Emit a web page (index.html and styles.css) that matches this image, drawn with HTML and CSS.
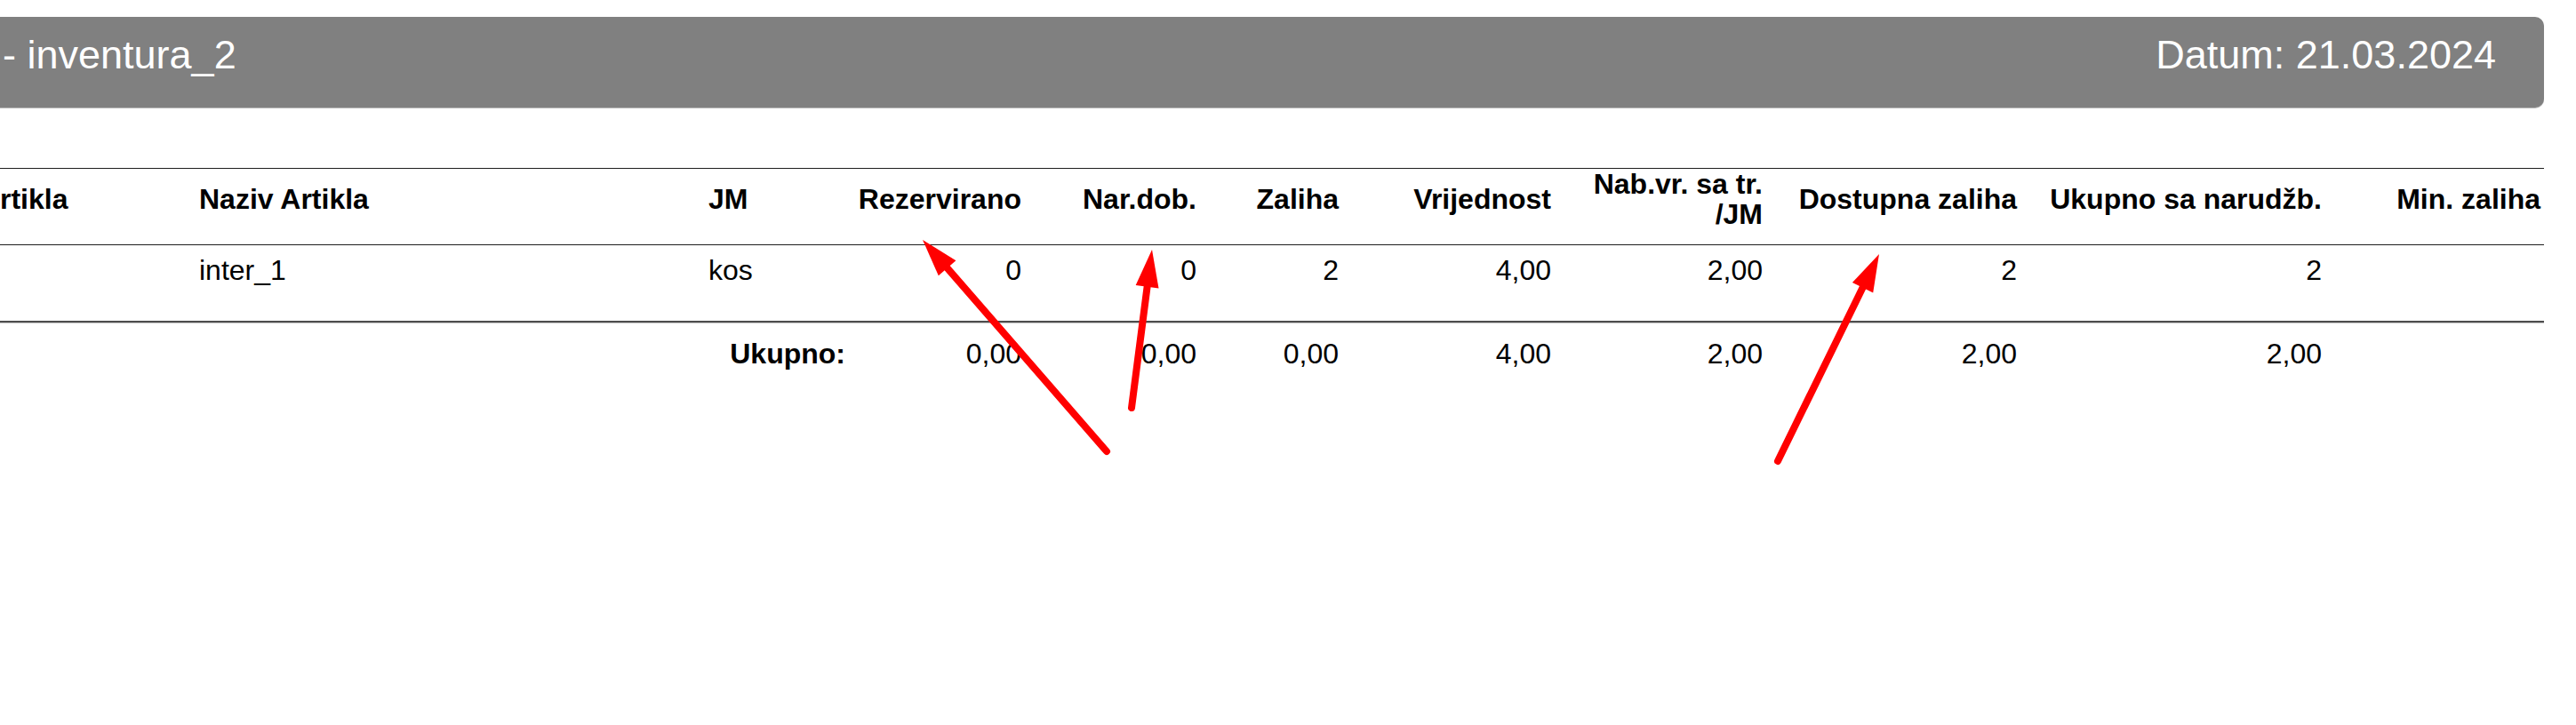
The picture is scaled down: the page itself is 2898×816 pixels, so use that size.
FILE: index.html
```html
<!DOCTYPE html>
<html lang="hr">
<head>
<meta charset="utf-8">
<title>Inventura - inventura_2</title>
<link rel="stylesheet" href="styles.css">
</head>
<body>
<div class="page">
  <header class="title-bar">
    <span class="title">- inventura_2</span>
    <span class="date">Datum: 21.03.2024</span>
  </header>
  <div class="table-wrap">
    <table class="report">
      <colgroup>
        <col class="c-sifra">
        <col class="c-naziv">
        <col class="c-jm">
        <col class="c-rez">
        <col class="c-nar">
        <col class="c-zal">
        <col class="c-vri">
        <col class="c-nab">
        <col class="c-dos">
        <col class="c-uku">
        <col class="c-min">
      </colgroup>
      <thead>
        <tr>
          <th class="l">Šifra Artikla</th>
          <th class="l">Naziv Artikla</th>
          <th class="l">JM</th>
          <th>Rezervirano</th>
          <th>Nar.dob.</th>
          <th>Zaliha</th>
          <th>Vrijednost</th>
          <th class="wrap">Nab.vr. sa tr. /JM</th>
          <th>Dostupna zaliha</th>
          <th>Ukupno sa narudžb.</th>
          <th>Min. zaliha</th>
        </tr>
      </thead>
      <tbody>
        <tr>
          <td class="l"></td>
          <td class="l">inter_1</td>
          <td class="l">kos</td>
          <td>0</td>
          <td>0</td>
          <td>2</td>
          <td>4,00</td>
          <td>2,00</td>
          <td>2</td>
          <td>2</td>
          <td></td>
        </tr>
      </tbody>
      <tfoot>
        <tr>
          <td colspan="3" class="total-label">Ukupno:</td>
          <td>0,00</td>
          <td>0,00</td>
          <td>0,00</td>
          <td>4,00</td>
          <td>2,00</td>
          <td>2,00</td>
          <td>2,00</td>
          <td></td>
        </tr>
      </tfoot>
    </table>
  </div>
</div>
<svg class="annotations" width="2898" height="816" viewBox="0 0 2898 816" aria-hidden="true">
  <g class="arrow">
    <line x1="1245" y1="508" x2="1065.6" y2="301.7"/>
    <polygon points="1038,270 1075.4,293.2 1055.8,310.2"/>
  </g>
  <g class="arrow">
    <line x1="1273" y1="459" x2="1290.6" y2="322.7"/>
    <polygon points="1296,281 1303.5,324.4 1277.7,321.0"/>
  </g>
  <g class="arrow">
    <line x1="2000" y1="519" x2="2095.5" y2="323.7"/>
    <polygon points="2114,286 2107.2,329.4 2083.9,318.0"/>
  </g>
</svg>
</body>
</html>
```

FILE: styles.css
```css
html, body {
  margin: 0;
  padding: 0;
  background: #ffffff;
}

body {
  position: relative;
  width: 2898px;
  height: 816px;
  overflow: hidden;
  font-family: "Liberation Sans", Arial, Helvetica, sans-serif;
  color: #000;
}

.page {
  padding: 19px 36px 0 0;
}

.title-bar {
  display: flex;
  justify-content: space-between;
  align-items: flex-start;
  background: #808080;
  color: #ffffff;
  font-size: 45px;
  line-height: 45px;
  padding: 20px 54px 37px 3px;
  border-radius: 0 10px 10px 0;
  box-shadow: 0 1px 0 #b4b4b4;
}

.table-wrap {
  margin-top: 68px;
}

.report {
  margin-left: -106px;
  width: 2968px;
  table-layout: fixed;
  border-collapse: separate;
  border-spacing: 0;
  font-size: 32px;
  line-height: 34px;
}

.c-sifra { width: 326px; }
.c-naziv { width: 573px; }
.c-jm { width: 162px; }
.c-rez { width: 198px; }
.c-nar { width: 197px; }
.c-zal { width: 160px; }
.c-vri { width: 239px; }
.c-nab { width: 238px; }
.c-dos { width: 286px; }
.c-uku { width: 343px; }
.c-min { width: 246px; }

.report th {
  font-weight: bold;
  text-align: right;
  vertical-align: middle;
  white-space: nowrap;
  padding: 0 4px 17px;
  border-top: 1px solid #1e1e1e;
  border-bottom: 1px solid #1e1e1e;
}

.report th.wrap {
  white-space: normal;
}

.report tbody td {
  text-align: right;
  vertical-align: top;
  padding: 11px 4px 40px;
  border-bottom: 2px solid #4d4d4d;
}

.report tfoot td {
  text-align: right;
  vertical-align: top;
  padding: 17px 4px 20px;
  border-top: 1px solid #c4c4c4;
}

.report .l {
  text-align: left;
}

.report .total-label {
  font-weight: bold;
}

.annotations {
  position: absolute;
  top: 0;
  left: 0;
  pointer-events: none;
}

.arrow line {
  stroke: #ff0000;
  stroke-width: 8;
  stroke-linecap: round;
}

.arrow polygon {
  fill: #ff0000;
}
```
